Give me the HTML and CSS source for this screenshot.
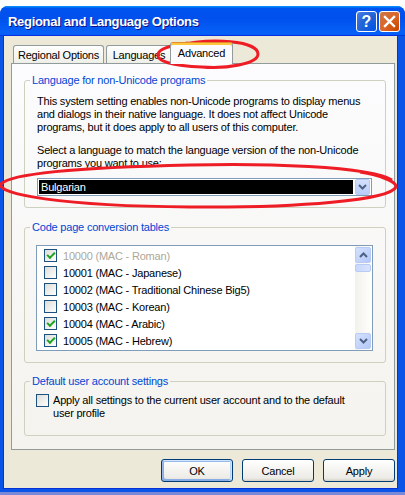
FILE: index.html
```html
<!DOCTYPE html>
<html lang="en">
<head>
    <meta charset="UTF-8">
    <meta name="viewport" content="width=device-width, initial-scale=1.0">
    <title>Regional and Language Options</title>
    <link rel="stylesheet" href="styles.css">
</head>
<body>
    <div class="window">
        <div class="titlebar">
            <span class="title">Regional and Language Options</span>
            <div class="caption-buttons">
                <span class="cap-btn help">?</span>
                <span class="cap-btn close">
                    <svg width="13" height="13" viewBox="0 0 13 13"><path d="M2 2 L11 11 M11 2 L2 11" stroke="#fff" stroke-width="2.4" stroke-linecap="square"/></svg>
                </span>
            </div>
        </div>
        <div class="client">
            <div class="tabs">
                <div class="tab tab-regional">Regional Options</div>
                <div class="tab tab-languages">Languages</div>
                <div class="tab tab-advanced selected">Advanced</div>
            </div>
            <div class="panel">
                <fieldset class="group group-lang">
                    <legend>Language for non-Unicode programs</legend>
                    <p>This system setting enables non-Unicode programs to display menus<br>and dialogs in their native language. It does not affect Unicode<br>programs, but it does apply to all users of this computer.</p>
                    <p class="select-hint">Select a language to match the language version of the non-Unicode<br>programs you want to use:</p>
                    <div class="combo">
                        <span class="combo-value">Bulgarian</span>
                        <span class="combo-btn">
                            <svg width="9" height="6" viewBox="0 0 9 6"><path d="M1 1 L4.5 4.5 L8 1" fill="none" stroke="#4D6185" stroke-width="2"/></svg>
                        </span>
                    </div>
                </fieldset>
                <fieldset class="group group-codepages">
                    <legend>Code page conversion tables</legend>
                    <div class="listbox">
                        <ul class="items">
                            <li class="disabled"><span class="check on"></span>10000 (MAC - Roman)</li>
                            <li><span class="check"></span>10001 (MAC - Japanese)</li>
                            <li><span class="check"></span>10002 (MAC - Traditional Chinese Big5)</li>
                            <li><span class="check"></span>10003 (MAC - Korean)</li>
                            <li><span class="check on"></span>10004 (MAC - Arabic)</li>
                            <li><span class="check on"></span>10005 (MAC - Hebrew)</li>
                        </ul>
                        <div class="scrollbar">
                            <span class="sb-btn">
                                <svg width="9" height="6" viewBox="0 0 9 6"><path d="M1 5 L4.5 1.5 L8 5" fill="none" stroke="#4D6185" stroke-width="2"/></svg>
                            </span>
                            <span class="sb-thumb"></span>
                            <span class="sb-track"></span>
                            <span class="sb-btn">
                                <svg width="9" height="6" viewBox="0 0 9 6"><path d="M1 1 L4.5 4.5 L8 1" fill="none" stroke="#4D6185" stroke-width="2"/></svg>
                            </span>
                        </div>
                    </div>
                </fieldset>
                <fieldset class="group group-default">
                    <legend>Default user account settings</legend>
                    <label class="check-row">
                        <span class="check"></span>
                        <span>Apply all settings to the current user account and to the default<br>user profile</span>
                    </label>
                </fieldset>
            </div>
            <div class="buttons">
                <button class="btn default">OK</button>
                <button class="btn">Cancel</button>
                <button class="btn">Apply</button>
            </div>
        </div>
    </div>
    <div class="desktop-edge"></div>

    <!-- red marker rings drawn over the dialog -->
    <svg class="marks" width="405" height="495" viewBox="0 0 405 495">
        <path d="M176 46 C212 37 258 41 258 54 C258 64 226 69 202 67 C172 66 156 61 158 54 C160 48 172 45 188 43" fill="none" stroke="#EE1C25" stroke-width="3"/>
        <path d="M392 180 C370 166 260 163 190 165 C100 167 12 172 1 184 C-4 194 60 206 190 207 C300 208 390 200 396 187 C397 182 380 175 360 172" fill="none" stroke="#EE1C25" stroke-width="3"/>
    </svg>
</body>
</html>
```

FILE: styles.css
```css
body {
    margin: 0;
    background: #fff;
    font-family: "Liberation Sans", Arial, sans-serif;
    font-size: 11px;
    letter-spacing: -0.2px;
    color: #000;
    position: relative;
    width: 405px;
    height: 495px;
    overflow: hidden;
}
p {
    margin: 0;
}
.window {
    margin-top: 6px;
    width: 405px;
    height: 486px;
    display: flex;
    flex-direction: column;
    background: #0A55E8;
    border-radius: 8px 8px 0 0;
    box-sizing: border-box;
}
/* Title bar */
.titlebar {
    height: 30px;
    flex: none;
    display: flex;
    align-items: center;
    padding: 0 5px 0 8px;
    border-radius: 8px 8px 0 0;
    background: linear-gradient(180deg, #0997ff, #0053ee 8%, #0050ee 40%, #0660f6 88%, #0660f6 93%, #005bff 95%, #003dd7 96%, #003dd7);
}
.title {
    color: #fff;
    font-weight: bold;
    font-size: 13px;
    letter-spacing: -0.3px;
    text-shadow: 1px 1px #0F1089;
}
.caption-buttons {
    margin-left: auto;
    display: flex;
    gap: 2px;
    margin-top: 1px;
}
.cap-btn {
    width: 21px;
    height: 21px;
    box-sizing: border-box;
    border: 1px solid #fff;
    border-radius: 3px;
    display: flex;
    align-items: center;
    justify-content: center;
    color: #fff;
}
.cap-btn.help {
    background: radial-gradient(circle at 90% 90%, #0054E9 0, #2263D5 55%, #4479E4 90%, #A3BBEC 100%);
    font-weight: bold;
    font-size: 16px;
    letter-spacing: 0;
}
.cap-btn.close {
    background: radial-gradient(circle at 90% 90%, #CC4600 0, #DC6527 55%, #CD7546 90%, #E5A01A 100%);
}
/* Client area */
.client {
    flex: 1;
    margin: 0 8px 4px 4px;
    background: #ECE9D8;
    padding-top: 6px;
    box-shadow: 0 0 0 1px #0831D9;
    display: flex;
    flex-direction: column;
}
.tabs {
    display: flex;
    align-items: flex-end;
    height: 21px;
    margin-left: 9px;
}
.tab {
    height: 18px;
    box-sizing: border-box;
    border: 1px solid #919B9C;
    border-bottom: none;
    border-radius: 3px 3px 0 0;
    background: linear-gradient(180deg, #fff, #fafaf9 26%, #f0f0ea 95%, #ecebe5);
    display: flex;
    align-items: center;
    justify-content: center;
}
.tab-regional {
    width: 91px;
    margin-right: 2px;
}
.tab-languages {
    width: 66px;
}
.tab.selected {
    width: 63px;
    height: 22px;
    margin-left: -2px;
    margin-bottom: -1px;
    position: relative;
    z-index: 1;
    background: #FCFCFE;
    border-top: 1px solid #E68B2C;
    box-shadow: inset 0 2px #FFC73C;
    padding-bottom: 2px;
}
/* Tab page */
.panel {
    margin-left: 7px;
    width: 384px;
    height: 387px;
    box-sizing: border-box;
    border: 1px solid #919B9C;
    background: linear-gradient(180deg, #FCFCFE, #F4F3EE);
    padding: 0 8px 0 12px;
}
.group {
    margin: 0;
    border: 1px solid #D0D0BF;
    border-radius: 3px;
    padding: 0 13px 0 12px;
    min-width: 0;
}
.group legend {
    color: #0046D5;
    line-height: 13px;
    padding: 0 2px;
    margin-left: -7px;
}
.group-lang {
    margin-top: 10px;
    padding-top: 8px;
    padding-bottom: 11px;
}
.group-lang p {
    line-height: 13px;
}
.select-hint {
    margin-top: 10px;
}
.combo {
    margin-top: 8px;
    height: 18px;
    box-sizing: border-box;
    border: 1px solid #7F9DB9;
    background: #fff;
    padding: 1px;
    display: flex;
}
.combo-value {
    flex: 1;
    background: #000;
    color: #fff;
    padding-left: 2px;
    line-height: 14px;
}
.combo-btn {
    width: 15px;
    margin-left: 2px;
    margin-top: -1px;
    margin-bottom: -1px;
    box-sizing: border-box;
    border: 1px solid #B7CBF6;
    border-radius: 2px;
    background: linear-gradient(180deg, #D5E1FC, #B9CDF9);
    display: flex;
    align-items: center;
    justify-content: center;
}
.group-codepages {
    margin-top: 13px;
    padding-top: 11px;
    padding-bottom: 11px;
}
.listbox {
    margin: 0 -1px;
    height: 106px;
    box-sizing: border-box;
    border: 1px solid #7F9DB9;
    background: #fff;
    display: flex;
}
.items {
    flex: 1;
    list-style: none;
    margin: 0;
    padding: 1px 0 0 7px;
}
.items li {
    height: 17px;
    display: flex;
    align-items: center;
}
.items li.disabled {
    color: #ACA899;
}
.check {
    width: 13px;
    height: 13px;
    flex: none;
    box-sizing: border-box;
    border: 1px solid #1C5180;
    background: linear-gradient(135deg, #DCDCD7, #FFFFFF);
    margin-right: 6px;
    display: inline-flex;
    align-items: center;
    justify-content: center;
}
.check.on::after {
    content: "";
    width: 6px;
    height: 3px;
    border-left: 2px solid #21A121;
    border-bottom: 2px solid #21A121;
    transform: translateY(-1px) rotate(-45deg);
}
.scrollbar {
    width: 16px;
    margin-right: 1px;
    padding: 1px 0;
    display: flex;
    flex-direction: column;
    background: linear-gradient(90deg, #F3F1EC, #FEFEFB);
}
.sb-btn {
    height: 16px;
    box-sizing: border-box;
    border: 1px solid #B7CBF6;
    border-radius: 2px;
    background: linear-gradient(135deg, #D5E1FC, #B4C8F9);
    display: flex;
    align-items: center;
    justify-content: center;
}
.sb-thumb {
    height: 8px;
    margin-top: 1px;
    box-sizing: border-box;
    border: 1px solid #B7CBF6;
    border-radius: 2px;
    background: linear-gradient(90deg, #C9D8FC, #D8E3FD);
}
.sb-track {
    flex: 1;
}
.group-default {
    margin-top: 12px;
    padding-top: 6px;
    padding-bottom: 15px;
}
.check-row {
    display: flex;
    align-items: flex-start;
    line-height: 13px;
    margin-left: -1px;
}
.check-row .check {
    margin-right: 4px;
}
/* Dialog buttons */
.buttons {
    display: flex;
    justify-content: flex-end;
    gap: 9px;
    margin-top: 9px;
    padding-right: 2px;
}
.btn {
    width: 72px;
    height: 23px;
    box-sizing: border-box;
    border: 1px solid #003C74;
    border-radius: 3px;
    background: linear-gradient(180deg, #fff, #ECEBE6 86%, #D6D0C5);
    font-family: "Liberation Sans", Arial, sans-serif;
    font-size: 11px;
    letter-spacing: -0.2px;
    color: #000;
    padding: 0;
}
.btn.default {
    box-shadow: inset -1px 1px #CEE7FF, inset 1px 2px #98B8EA, inset -2px 0 #BCD4F6, inset 1px -1px #89ADE4, inset 2px -2px #89ADE4;
}
.desktop-edge {
    height: 3px;
    background: #7A88D8;
}
.marks {
    position: absolute;
    top: 0;
    left: 0;
    pointer-events: none;
}
```
